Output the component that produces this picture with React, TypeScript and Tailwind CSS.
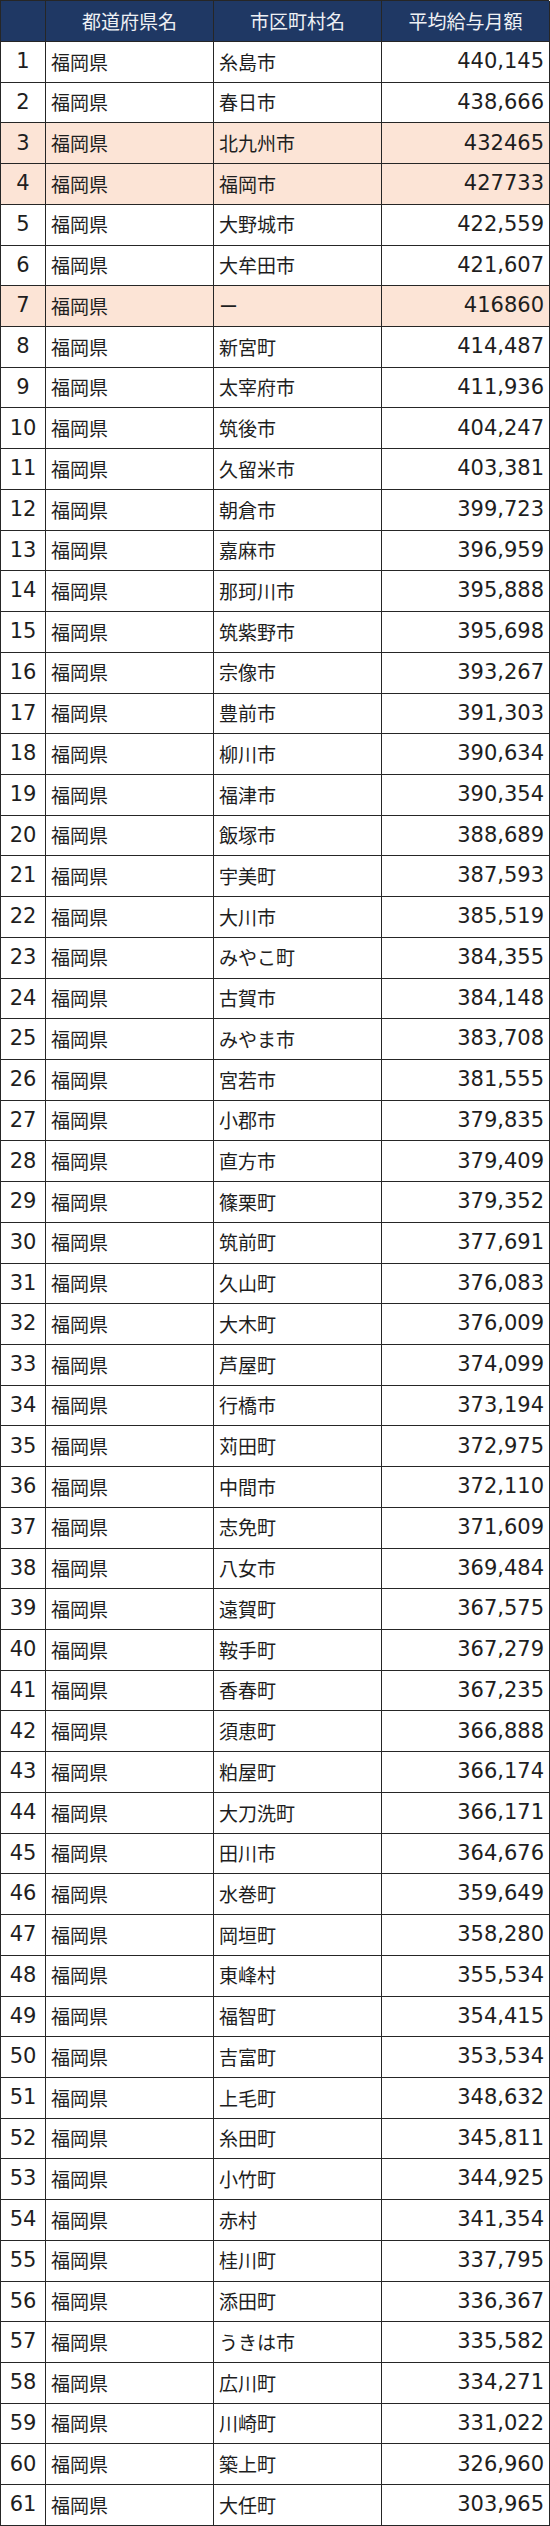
const rows: [string, string, boolean?][] = [
  ['糸島市', '440,145'],
  ['春日市', '438,666'],
  ['北九州市', '432465', true],
  ['福岡市', '427733', true],
  ['大野城市', '422,559'],
  ['大牟田市', '421,607'],
  ['ー', '416860', true],
  ['新宮町', '414,487'],
  ['太宰府市', '411,936'],
  ['筑後市', '404,247'],
  ['久留米市', '403,381'],
  ['朝倉市', '399,723'],
  ['嘉麻市', '396,959'],
  ['那珂川市', '395,888'],
  ['筑紫野市', '395,698'],
  ['宗像市', '393,267'],
  ['豊前市', '391,303'],
  ['柳川市', '390,634'],
  ['福津市', '390,354'],
  ['飯塚市', '388,689'],
  ['宇美町', '387,593'],
  ['大川市', '385,519'],
  ['みやこ町', '384,355'],
  ['古賀市', '384,148'],
  ['みやま市', '383,708'],
  ['宮若市', '381,555'],
  ['小郡市', '379,835'],
  ['直方市', '379,409'],
  ['篠栗町', '379,352'],
  ['筑前町', '377,691'],
  ['久山町', '376,083'],
  ['大木町', '376,009'],
  ['芦屋町', '374,099'],
  ['行橋市', '373,194'],
  ['苅田町', '372,975'],
  ['中間市', '372,110'],
  ['志免町', '371,609'],
  ['八女市', '369,484'],
  ['遠賀町', '367,575'],
  ['鞍手町', '367,279'],
  ['香春町', '367,235'],
  ['須恵町', '366,888'],
  ['粕屋町', '366,174'],
  ['大刀洗町', '366,171'],
  ['田川市', '364,676'],
  ['水巻町', '359,649'],
  ['岡垣町', '358,280'],
  ['東峰村', '355,534'],
  ['福智町', '354,415'],
  ['吉富町', '353,534'],
  ['上毛町', '348,632'],
  ['糸田町', '345,811'],
  ['小竹町', '344,925'],
  ['赤村', '341,354'],
  ['桂川町', '337,795'],
  ['添田町', '336,367'],
  ['うきは市', '335,582'],
  ['広川町', '334,271'],
  ['川崎町', '331,022'],
  ['築上町', '326,960'],
  ['大任町', '303,965'],
]

const cols = 'grid grid-cols-[45px_168px_168px_168px]'
const cell = 'flex items-center border-r border-b border-[#262626]'
// numbers look Verdana-ish in the source sheet
const num = { fontFamily: '"DejaVu Sans", "Noto Sans CJK JP", sans-serif' }

export default function App() {
  return (
    <div
      className="w-[550px] bg-white text-[#1e1e1e]"
      style={{ fontFamily: '"Noto Sans CJK JP", "Noto Sans", sans-serif' }}
    >
      <div className="w-[549px] border-l border-t border-[#262626]">
        {/* header */}
        <div className={`${cols} h-[41px] bg-[#1f3864] text-[19px] text-[#eef0f4]`}>
          <div className={cell} />
          <div className={`${cell} justify-center`}>都道府県名</div>
          <div className={`${cell} justify-center`}>市区町村名</div>
          <div className={`${cell} justify-center`}>平均給与月額</div>
        </div>

        {rows.map(([city, amount, hl], i) => (
          <div
            key={i}
            className={`${cols} h-[40.73px] ${hl ? 'bg-[#fce4d6]' : 'bg-white'}`}
          >
            <div className={`${cell} justify-center text-[21px]`} style={num}>{i + 1}</div>
            <div className={`${cell} pl-[5px] text-[19px]`}>福岡県</div>
            <div className={`${cell} pl-[5px] text-[19px]`}>{city}</div>
            <div className={`${cell} justify-end pr-[5px] text-[21px]`} style={num}>{amount}</div>
          </div>
        ))}
      </div>
    </div>
  )
}
